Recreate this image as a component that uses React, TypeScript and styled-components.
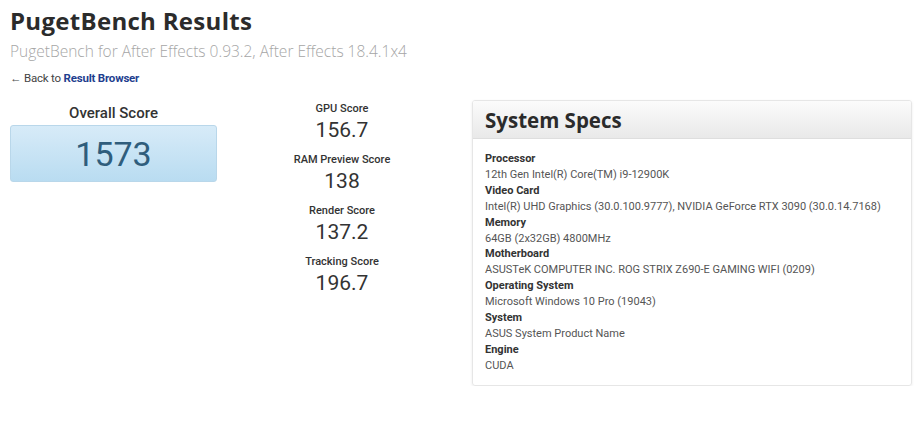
import React from "react";
import styled, { createGlobalStyle } from "styled-components";

const Global = createGlobalStyle`
  html, body { margin: 0; padding: 0; background: #fff; }
  body { font-family: Roboto, "Liberation Sans", sans-serif; color: #333; }
`;

const Page = styled.div`
  padding: 5px 10px 0 10px;
  width: 924px;
  box-sizing: border-box;
`;

const Title = styled.h1`
  margin: 0;
  font-family: "Open Sans", sans-serif;
  font-weight: 700;
  font-size: 24px;
  line-height: 31px;
  color: #2b2b2b;
  letter-spacing: 0.3px;
`;

const Subtitle = styled.div`
  margin-top: 4px;
  font-family: "Open Sans", sans-serif;
  font-weight: 300;
  font-size: 15.5px;
  line-height: 22px;
  color: #a6a6a6;
`;

const Back = styled.div`
  margin-top: 9px;
  font-size: 11.5px;
  line-height: 14px;
  color: #444;
  letter-spacing: -0.2px;
`;

const BackLink = styled.a`
  color: #1f3f8f;
  font-weight: 700;
  text-decoration: none;
`;

const Main = styled.div`
  display: flex;
  align-items: flex-start;
  margin-top: 17px;
`;

const OverallCol = styled.div`
  width: 207px;
  display: flex;
  flex-direction: column;
  align-items: center;
`;

const OverallLabel = styled.div`
  font-size: 15px;
  font-weight: 500;
  line-height: 20px;
  margin-top: 1px;
  color: #333;
`;

const OverallBox = styled.div`
  margin-top: 2px;
  width: 100%;
  height: 57px;
  box-sizing: border-box;
  border: 1px solid #b9d7ea;
  border-radius: 3px;
  background: linear-gradient(#d7ebf8, #b9dcf1);
  display: flex;
  align-items: center;
  justify-content: center;
  font-size: 34px;
  color: #2f5d7c;
`;

const ScoresCol = styled.div`
  width: 220px;
  margin-left: 15px;
  display: flex;
  flex-direction: column;
  align-items: center;
  gap: 9px;
`;

const Score = styled.div`
  display: flex;
  flex-direction: column;
  align-items: center;
`;

const ScoreLabel = styled.div`
  font-size: 11px;
  font-weight: 500;
  line-height: 14px;
  color: #333;
`;

const ScoreValue = styled.div`
  font-size: 21px;
  line-height: 28px;
  color: #333;
`;

const Card = styled.div`
  margin-left: 20px;
  margin-top: -2px;
  width: 440px;
  box-sizing: border-box;
  border: 1px solid #e6e6e6;
  border-radius: 3px;
  box-shadow: 0 1px 3px rgba(0, 0, 0, 0.08);
  overflow: hidden;
`;

const CardHeader = styled.div`
  height: 38px;
  box-sizing: border-box;
  padding: 0 12px;
  display: flex;
  align-items: center;
  background: linear-gradient(#fbfbfb, #e9e9e9);
  border-bottom: 1px solid #dedede;
  font-family: "Open Sans", sans-serif;
  font-weight: 700;
  font-size: 20.5px;
  color: #2b2b2b;
`;

const CardBody = styled.div`
  padding: 12px 12px 11px 12px;
  font-size: 11px;
  line-height: 15.9px;
`;

const SpecLabel = styled.div`
  font-weight: 700;
  color: #333;
`;

const SpecValue = styled.div`
  color: #555;
`;

const scores = [
  ["GPU Score", "156.7"],
  ["RAM Preview Score", "138"],
  ["Render Score", "137.2"],
  ["Tracking Score", "196.7"],
];

const specs = [
  ["Processor", "12th Gen Intel(R) Core(TM) i9-12900K"],
  ["Video Card", "Intel(R) UHD Graphics (30.0.100.9777), NVIDIA GeForce RTX 3090 (30.0.14.7168)"],
  ["Memory", "64GB (2x32GB) 4800MHz"],
  ["Motherboard", "ASUSTeK COMPUTER INC. ROG STRIX Z690-E GAMING WIFI (0209)"],
  ["Operating System", "Microsoft Windows 10 Pro (19043)"],
  ["System", "ASUS System Product Name"],
  ["Engine", "CUDA"],
];

export default function App() {
  return (
    <Page>
      <Global />
      <Title>PugetBench Results</Title>
      <Subtitle>PugetBench for After Effects 0.93.2, After Effects 18.4.1x4</Subtitle>
      <Back>
        ← Back to <BackLink href="#">Result Browser</BackLink>
      </Back>
      <Main>
        <OverallCol>
          <OverallLabel>Overall Score</OverallLabel>
          <OverallBox>1573</OverallBox>
        </OverallCol>
        <ScoresCol>
          {scores.map(([l, v]) => (
            <Score key={l}>
              <ScoreLabel>{l}</ScoreLabel>
              <ScoreValue>{v}</ScoreValue>
            </Score>
          ))}
        </ScoresCol>
        <Card>
          <CardHeader>System Specs</CardHeader>
          <CardBody>
            {specs.map(([l, v]) => (
              <React.Fragment key={l}>
                <SpecLabel>{l}</SpecLabel>
                <SpecValue>{v}</SpecValue>
              </React.Fragment>
            ))}
          </CardBody>
        </Card>
      </Main>
    </Page>
  );
}
